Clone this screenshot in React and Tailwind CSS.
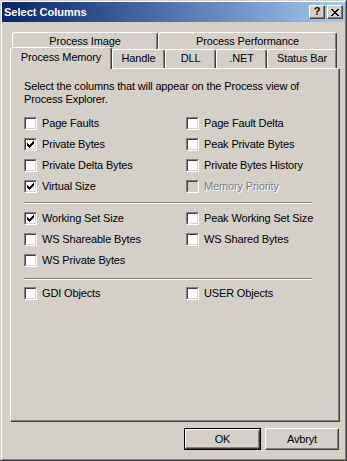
import React from 'react'

const Check = () => (
  <svg width="9" height="9" viewBox="0 0 9 9" shapeRendering="crispEdges" className="block">
    <rect x="1" y="3" width="1" height="3" fill="#000" />
    <rect x="2" y="4" width="1" height="3" fill="#000" />
    <rect x="3" y="5" width="1" height="3" fill="#000" />
    <rect x="4" y="4" width="1" height="3" fill="#000" />
    <rect x="5" y="3" width="1" height="3" fill="#000" />
    <rect x="6" y="2" width="1" height="3" fill="#000" />
    <rect x="7" y="1" width="1" height="3" fill="#000" />
  </svg>
)

const CheckBox = ({ label, checked, disabled }) => (
  <div className="flex items-center h-[21px]">
    <div className="w-[13px] h-[13px] border border-t-[#808080] border-l-[#808080] border-b-white border-r-white shrink-0">
      <div
        className={`w-full h-full border border-t-[#404040] border-l-[#404040] border-b-[#d4d0c8] border-r-[#d4d0c8] ${
          disabled ? 'bg-[#d4d0c8]' : 'bg-white'
        }`}
      >
        {checked && <Check />}
      </div>
    </div>
    <span
      className={`ml-[5px] leading-[13px] ${
        disabled ? 'text-[#808080] [text-shadow:1px_1px_0_#fff]' : 'text-black'
      }`}
    >
      {label}
    </span>
  </div>
)

const Separator = () => (
  <div className="w-[288px] border-t border-t-[#808080] border-b border-b-white" />
)

const Tab = ({ label, width, selected }) => (
  <div
    className={`flex items-center justify-center border-t border-l border-white border-r border-r-[#404040] rounded-t-[3px] shadow-[inset_-1px_0_#808080] bg-[#d4d0c8] ${
      selected ? 'relative z-10 h-[22px] -mt-[2px] -mb-px pb-[3px]' : 'h-[19px] pb-px'
    }`}
    style={{ width }}
  >
    {label}
  </div>
)

const TitleButton = ({ children }) => (
  <div className="w-[16px] h-[14px] bg-[#d4d0c8] border border-t-white border-l-white border-r-[#404040] border-b-[#404040] flex items-center justify-center shadow-[inset_-1px_-1px_#808080]">
    {children}
  </div>
)

export default function App() {
  return (
    <div className="w-[347px] h-[461px] bg-[#d4d0c8] border-r border-b border-[#404040] pl-px pt-px font-['Liberation_Sans',Arial,sans-serif] text-[11px] tracking-[-0.15px] text-black select-none">
      <div className="h-full border border-t-white border-l-white border-r-[#808080] border-b-[#808080] flex flex-col">
        {/* Title bar */}
        <div className="h-[20px] bg-gradient-to-r from-[#0a246a] to-[#a6caf0] flex items-center pl-[2px] pr-[2px]">
          <span className="text-white font-bold text-[11px] tracking-normal leading-none">Select Columns</span>
          <div className="ml-auto flex gap-[2px]">
            <TitleButton>
              <span className="font-bold text-[11px] leading-none text-black -mt-px">?</span>
            </TitleButton>
            <TitleButton>
              <svg width="8" height="7" viewBox="0 0 8 7" shapeRendering="crispEdges" className="block">
                <path d="M0 0h2v1h-2zM6 0h2v1h-2zM1 1h2v1h-2zM5 1h2v1h-2zM2 2h4v1h-4zM3 3h2v1h-2zM2 4h4v1h-4zM1 5h2v1h-2zM5 5h2v1h-2zM0 6h2v1h-2zM6 6h2v1h-2z" fill="#000" />
              </svg>
            </TitleButton>
          </div>
        </div>

        <div className="ml-[8px] mr-[5px] mt-[10px] flex flex-col">
          {/* Tabs back row */}
          <div className="flex pl-[2px] h-[17px]">
            <Tab label="Process Image" width={146} />
            <Tab label="Process Performance" width={179} />
          </div>
          {/* Tabs front row */}
          <div className="flex h-[19px] items-start">
            <Tab label="Process Memory" width={102} selected />
            <Tab label="Handle" width={53} />
            <Tab label="DLL" width={51} />
            <Tab label=".NET" width={51} />
            <Tab label="Status Bar" width={70} />
          </div>

          {/* Panel */}
          <div className="h-[354px] border-t border-l border-white border-r border-b border-r-[#404040] border-b-[#404040] shadow-[inset_-1px_-1px_#808080] pl-[13px] pt-[11px]">
            <p className="leading-[13px]">
              Select the columns that will appear on the Process view of
              <br />
              Process Explorer.
            </p>

            <div className="mt-[7px] grid grid-cols-[162px_1fr]">
              <CheckBox label="Page Faults" />
              <CheckBox label="Page Fault Delta" />
              <CheckBox label="Private Bytes" checked />
              <CheckBox label="Peak Private Bytes" />
              <CheckBox label="Private Delta Bytes" />
              <CheckBox label="Private Bytes History" />
              <CheckBox label="Virtual Size" checked />
              <CheckBox label="Memory Priority" disabled />
            </div>

            <div className="mt-[5px]">
              <Separator />
            </div>

            <div className="mt-[4px] grid grid-cols-[162px_1fr]">
              <CheckBox label="Working Set Size" checked />
              <CheckBox label="Peak Working Set Size" />
              <CheckBox label="WS Shareable Bytes" />
              <CheckBox label="WS Shared Bytes" />
              <CheckBox label="WS Private Bytes" />
            </div>

            <div className="mt-[7px]">
              <Separator />
            </div>

            <div className="mt-[3px] grid grid-cols-[162px_1fr]">
              <CheckBox label="GDI Objects" />
              <CheckBox label="USER Objects" />
            </div>
          </div>

          {/* Buttons */}
          <div className="mt-[6px] flex justify-end gap-[4px] pr-px">
            <div className="w-[77px] h-[22px] border border-black">
              <div className="w-full h-full border border-t-white border-l-white border-r-[#404040] border-b-[#404040] shadow-[inset_-1px_-1px_#808080] flex items-center justify-center">
                OK
              </div>
            </div>
            <div className="w-[74px] h-[22px] border border-t-white border-l-white border-r-[#404040] border-b-[#404040] shadow-[inset_-1px_-1px_#808080] flex items-center justify-center">
              Avbryt
            </div>
          </div>
        </div>
      </div>
    </div>
  )
}
